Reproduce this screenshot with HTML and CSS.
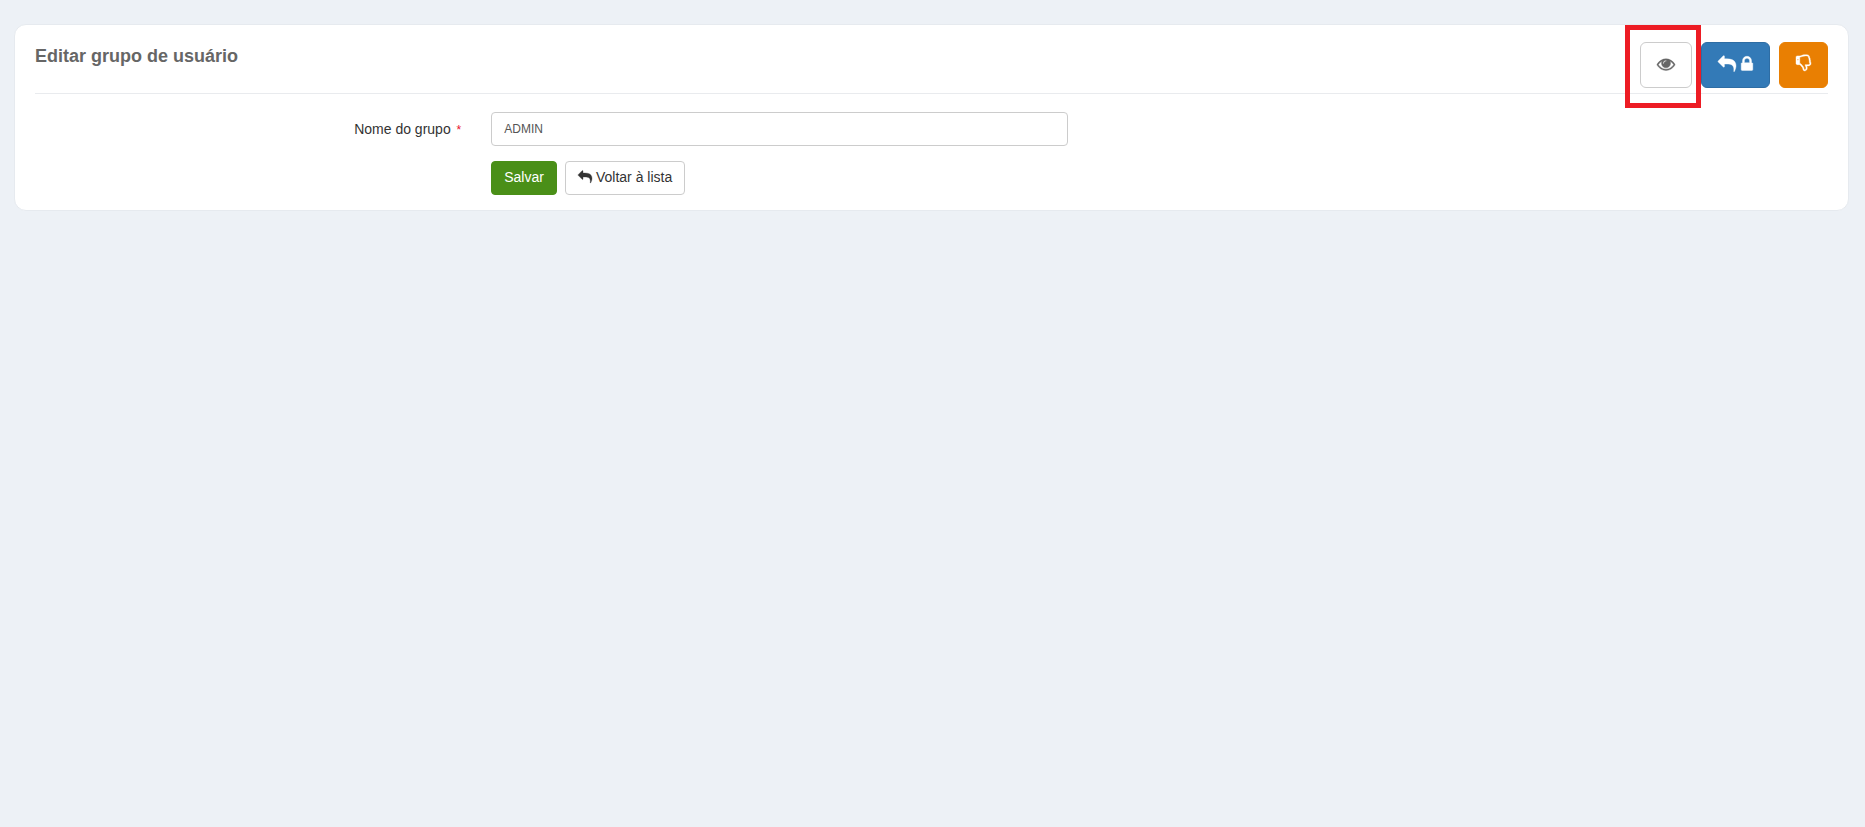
FILE: index.html
```
<!DOCTYPE html>
<html lang="pt-BR">
<head>
    <meta charset="UTF-8">
    <meta name="viewport" content="width=device-width, initial-scale=1.0">
    <title>Editar grupo de usuário</title>
    <link rel="stylesheet" href="styles.css">
</head>
<body>
    <main class="panel">
        <header class="panel-title">
            <h2>Editar grupo de usuário</h2>
            <div class="toolbox">
                <div class="highlight">
                    <button type="button" class="btn btn-lg btn-default btn-view" aria-label="Visualizar">
                        <svg class="icon" viewBox="0 0 1792 1792"><path d="M1664 960q-152-236-381-353 61 104 61 225 0 185-131.5 316.5t-316.5 131.5-316.5-131.5-131.5-316.5q0-121 61-225-229 117-381 353 133 205 333.5 326.5t434.5 121.5 434.5-121.5 333.5-326.5zm-720-384q0-20-14-34t-34-14q-125 0-214.5 89.5t-89.5 214.5q0 20 14 34t34 14 34-14 14-34q0-86 61-147t147-61q20 0 34-14t14-34zm848 384q0 34-20 69-140 230-376.5 368.5t-499.5 138.5-499.5-139-376.5-368q-20-35-20-69t20-69q140-229 376.5-368t499.5-139 499.5 139 376.5 368q20 35 20 69z"/></svg>
                    </button>
                </div>
                <button type="button" class="btn btn-lg btn-primary" aria-label="Restaurar permissões">
                    <svg class="icon" viewBox="0 0 1792 1792"><path d="M1792 1120q0 166-127 451-3 7-10.5 24t-13.5 30-13 22q-12 17-28 17-15 0-23.5-10t-8.5-25q0-9 2.5-26.5t2.5-23.5q5-68 5-123 0-101-17.5-181t-48.5-138.5-80-101-105.5-69.5-133-42.5-154-21.5-175.5-6h-224v256q0 26-19 45t-45 19-45-19l-512-512q-19-19-19-45t19-45l512-512q19-19 45-19t45 19 19 45v256h224q713 0 875 403 53 134 53 333z"/></svg>
                    <svg class="icon icon-lock" viewBox="320 0 1152 1792"><path d="M640 768h512v-192q0-106-75-181t-181-75-181 75-75 181v192zm832 96v576q0 40-28 68t-68 28h-960q-40 0-68-28t-28-68v-576q0-40 28-68t68-28h32v-192q0-184 132-316t316-132 316 132 132 316v192h32q40 0 68 28t28 68z"/></svg>
                </button>
                <button type="button" class="btn btn-lg btn-warning" aria-label="Desativar">
                    <svg class="icon icon-thumb" viewBox="128 0 1536 1792"><path d="M384 448q0-26-19-45t-45-19-45 19-19 45 19 45 45 19 45-19 19-45zm1152 384q0-35-21.5-81t-53.5-47q15-17 25-47.5t10-55.5q0-69-53-119 18-31 18-69 0-37-17.5-73.5t-47.5-52.5q5-30 5-56 0-85-49-126t-136-41h-128q-131 0-342 73-5 2-29 10.5t-35.5 12.5-35 11.5-38 11-31 6.5-33 3h-32v640h32q16 0 35.5 9t40 27 38.5 35.5 40 44 34.5 42.5 31.5 41 23 30q55 68 77 91 41 43 59.5 109.5t30.5 125.5 38 85q96 0 128-47t32-145q0-59-48-160.5t-48-159.5h352q50 0 89-38.5t39-89.5zm128 1q0 103-76 179t-180 76h-176q48 99 48 192 0 118-35 186-35 69-102 101.5t-151 32.5q-51 0-90-37-34-33-54-82t-25.5-90.5-17.5-84.5-31-64q-48-50-107-127-101-131-137-155h-274q-53 0-90.5-37.5t-37.5-90.5v-640q0-53 37.5-90.5t90.5-37.5h288q22 0 138-40 128-44 223-66t200-22h112q140 0 226.5 79t85.5 216v5q60 77 60 178 0 22-3 43 38 67 38 144 0 36-9 69 49 73 49 163z"/></svg>
                </button>
            </div>
        </header>

        <form class="group-form">
            <div class="form-row">
                <label for="nome">Nome do grupo <span class="required">*</span></label>
                <div class="field">
                    <input type="text" id="nome" name="nome" value="ADMIN" required>
                </div>
            </div>
            <div class="form-row">
                <div class="field actions">
                    <button type="submit" class="btn btn-success">Salvar</button>
                    <button type="button" class="btn btn-default">
                        <svg class="icon" viewBox="0 0 1792 1792"><path d="M1792 1120q0 166-127 451-3 7-10.5 24t-13.5 30-13 22q-12 17-28 17-15 0-23.5-10t-8.5-25q0-9 2.5-26.5t2.5-23.5q5-68 5-123 0-101-17.5-181t-48.5-138.5-80-101-105.5-69.5-133-42.5-154-21.5-175.5-6h-224v256q0 26-19 45t-45 19-45-19l-512-512q-19-19-19-45t19-45l512-512q19-19 45-19t45 19 19 45v256h224q713 0 875 403 53 134 53 333z"/></svg>
                        Voltar à lista
                    </button>
                </div>
            </div>
        </form>
    </main>
</body>
</html>
```
FILE: styles.css
```
* { box-sizing: border-box; }
body { margin: 0; padding: 24px 16px 24px 14px; background: #edf1f6; color: #333; font-family: Arial, "Liberation Sans", sans-serif; font-size: 14px; line-height: 20px; }

.panel { padding: 17px 20px 15px; background: #fff; border: 1px solid #e6eaef; border-radius: 12px; }
.panel-title { display: flex; justify-content: space-between; align-items: flex-start; padding-bottom: 5px; border-bottom: 1px solid #e9ebee; }
.panel-title h2 { margin: 4px 0 0; color: #666; font-size: 18px; line-height: 20px; font-weight: bold; }
.toolbox { display: flex; gap: 9px; }

.btn { display: inline-flex; align-items: center; justify-content: center; gap: 4px; height: 34px; padding: 0 12px 2px; border: 1px solid transparent; border-radius: 4px; font-family: inherit; font-size: 14px; line-height: 20px; cursor: pointer; }
.btn-lg { gap: 5px; height: 46px; padding: 0 16px 2px; border-radius: 6px; font-size: 18px; }
.btn-default { background: #fff; border-color: #ccc; color: #333; }
.btn-default:hover { background: #e6e6e6; }
.btn-view { color: #666; }
.btn-primary { background: #337ab7; border-color: #2e6da4; color: #fff; }
.btn-warning { background: #e97f02; border-color: #e97f02; color: #fff; }
.btn-success { background: #4a8f18; border-color: #4a8f18; color: #fff; }

.icon { width: 1em; height: 1em; fill: currentColor; stroke: currentColor; stroke-width: 40; overflow: visible; flex: none; }
.icon-lock { width: 12px; }
.icon-thumb { width: 15px; }

/* red frame around the view button */
.highlight { position: relative; display: flex; }
.highlight::after { content: ""; position: absolute; top: -17px; right: -9px; bottom: -20px; left: -15px; border: 5px solid #ed1c24; pointer-events: none; }

.group-form { display: flex; flex-direction: column; gap: 15px; margin-top: 18px; }
.form-row { display: flex; }
.form-row label { flex: 0 0 25%; padding: 7px 22px 0 0; text-align: right; }
.required { margin-left: 2px; color: #e8112d; font-size: 12px; }
.field { flex: 0 0 33.33%; padding: 0 13px 0 8px; }
.field input { display: block; width: 100%; height: 34px; padding: 0 12px; border: 1px solid #ccc; border-radius: 4px; background: #fff; color: #555; font-family: inherit; font-size: 12px; }
.actions { display: flex; gap: 8px; margin-left: 25%; }
```
